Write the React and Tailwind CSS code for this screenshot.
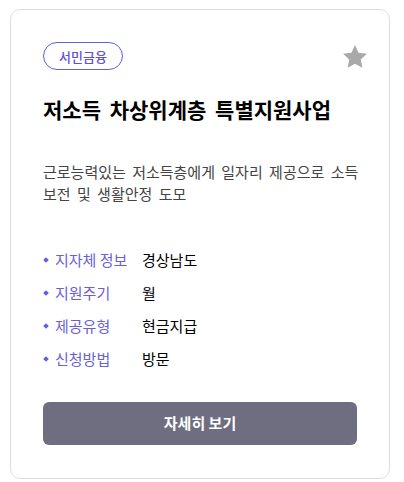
const info = [
  { label: '지자체 정보', value: '경상남도' },
  { label: '지원주기', value: '월' },
  { label: '제공유형', value: '현금지급' },
  { label: '신청방법', value: '방문' },
];

const StarIcon = () => (
  <svg width="28" height="28" viewBox="0 0 24 24" fill="#a9a9a9">
    <path d="M12 1.8l3.05 6.55 7.15.85-5.28 4.9 1.4 7.1L12 17.7l-6.32 3.5 1.4-7.1L1.8 9.2l7.15-.85z" />
  </svg>
);

export default function App() {
  return (
    <div className="w-[404px] h-[482px] bg-white pl-[10px] pt-[9px] font-['Noto_Sans_CJK_KR','Noto_Sans',sans-serif]">
      <div className="w-[380px] h-[470px] border border-[#dedede] rounded-[10px] px-[32px] pt-[32px] flex flex-col">
        {/* header */}
        <div className="flex items-start justify-between">
          <span className="h-[28px] px-[15px] flex items-center rounded-full border border-[#5b63d9] text-[13px] font-medium text-[#6350d4] leading-none">
            서민금융
          </span>
          <div className="mr-[-12px] mt-[1px]">
            <StarIcon />
          </div>
        </div>

        <h2 className="mt-[23px] text-[21px] leading-[30px] font-bold text-black [word-spacing:4px]">
          저소득 차상위계층 특별지원사업
        </h2>

        <p className="mt-[37px] mr-[-4px] text-[15px] leading-[22px] text-[#444] [word-spacing:3px] break-keep">
          근로능력있는 저소득층에게 일자리 제공으로 소득 보전 및 생활안정 도모
        </p>

        <ul className="mt-[44px] flex flex-col gap-[11px]">
          {info.map((row) => (
            <li key={row.label} className="flex items-center text-[15px] leading-[22px]">
              <span className="w-[4px] h-[4px] rotate-45 bg-[#5b63d9] ml-[1px] mr-[7px]" />
              <span className="w-[87px] text-[#6a5fd8]">{row.label}</span>
              <span className="text-black">{row.value}</span>
            </li>
          ))}
        </ul>

        <button className="mt-[32px] h-[43px] w-full rounded-[6px] bg-[#6e6e80] text-white text-[15px] font-bold">
          자세히 보기
        </button>
      </div>
    </div>
  );
}
